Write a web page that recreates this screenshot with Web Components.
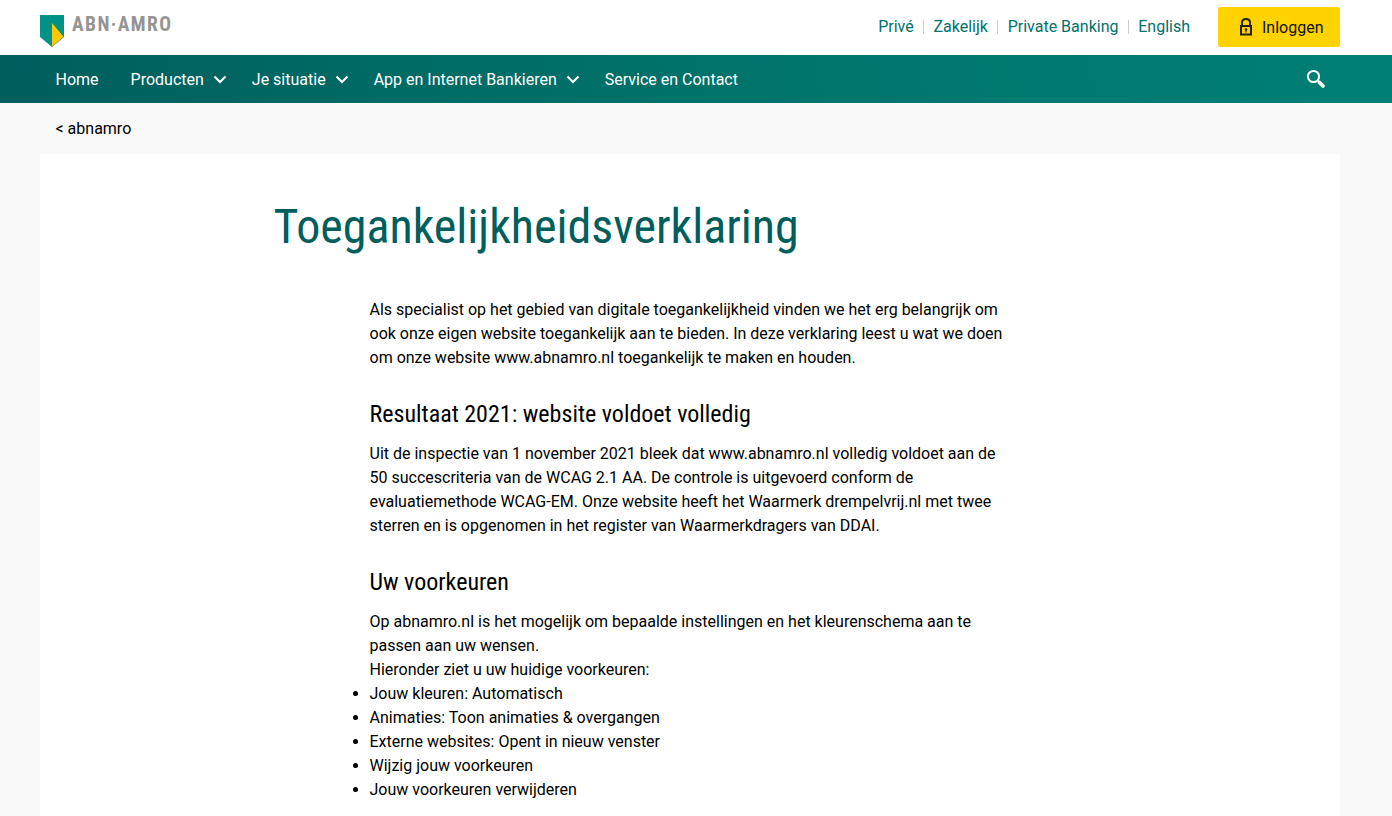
<!DOCTYPE html>
<html lang="nl">
<head>
<meta charset="utf-8">
<title>Toegankelijkheidsverklaring - ABN AMRO</title>
<style>
html,body{margin:0;height:816px;overflow:hidden}
body{background:#f9f9f9;color:#000;font:16px/24px Roboto,"Liberation Sans",sans-serif}
</style>
</head>
<body>
<bank-page></bank-page>
<script>
function define(name, html){
  const t=document.createElement('template');
  t.innerHTML=html;
  customElements.define(name,class extends HTMLElement{
    constructor(){super();this.attachShadow({mode:'open'}).append(t.content.cloneNode(true));}
  });
}

define('bank-logo',`
<style>:host{display:flex;align-items:flex-start}svg{display:block}
text{font:700 19.500px "Roboto Condensed",Roboto,sans-serif;font-stretch:80%}</style>
<svg width="132" height="34" viewBox="0 0 132 34" role="img" aria-label="ABN AMRO">
<path fill="#009286" d="M0 1h24v22L12 33 0 23z"/>
<path fill="#ffc800" d="M12 9l11.500 13.700L12 32.500z"/>
<text x="32" y="17" textLength="99" lengthAdjust="spacing" fill="#949494">ABN·AMRO</text>
</svg>`);

define('segment-links',`
<style>:host{display:flex;color:#00716b;line-height:24px}
span+span::before{content:"";display:inline-block;width:1px;height:14px;background:#ccc;margin:0 9.400px;vertical-align:-2px}</style>
<span>Privé</span><span>Zakelijk</span><span>Private Banking</span><span>English</span>`);

define('login-button',`
<style>:host{display:flex;box-sizing:border-box;width:122px;height:40px;border-radius:2px;background:#ffd200;color:#111;align-items:center;padding-left:21px}
svg{margin-right:9px}span{padding-top:2px}</style>
<svg width="14" height="20" viewBox="0 0 14 20" fill="none" stroke="#222" stroke-width="2"><path d="M3 9V5.500C3 .800 11 .800 11 5.500V9"/><rect x="2" y="9" width="10" height="8.500"/><circle cx="7" cy="12.500" r="1.300" fill="#222" stroke="none"/><path d="M7 12.500v3" stroke-width="1.200"/></svg><span><slot></slot></span>`);

define('top-bar',`
<style>:host{display:flex;height:55px;box-sizing:border-box;background:#fff;padding:7px 52px 0 40px;align-items:flex-start}
bank-logo{margin-top:7px}segment-links{margin:8px 28px 0 auto}</style>
<bank-logo></bank-logo><segment-links></segment-links><login-button>Inloggen</login-button>`);

define('nav-item',`
<style>:host{display:flex;align-items:center;margin-right:32px;white-space:nowrap}
span{padding-top:2px}
svg{display:none;margin-left:9px}:host([menu]) svg{display:block}:host([menu]){margin-right:25px}</style>
<span><slot></slot></span><svg width="14" height="10" viewBox="0 0 14 10" fill="none" stroke="#fff" stroke-width="2"><path d="M1.500 2.500 7 8l5.500-5.500"/></svg>`);

define('nav-bar',`
<style>:host{display:flex;height:48px;align-items:center;box-sizing:border-box;padding:0 66px 0 55.500px;color:#fff;background:linear-gradient(75deg,#005e5d 0%,#006b65 30%,#00766d 60%,#008075 100%)}
.search{margin-left:auto}</style>
<nav-item>Home</nav-item><nav-item menu>Producten</nav-item><nav-item menu>Je situatie</nav-item><nav-item menu>App en Internet Bankieren</nav-item><nav-item>Service en Contact</nav-item>
<svg class="search" width="20" height="20" viewBox="0 0 20 20" fill="none" stroke="#fff"><circle cx="7.500" cy="7.500" r="5.600" stroke-width="2"/><path d="M11.500 11.500l2 2" stroke-width="2"/><path d="M13.500 13.500l3.500 3.500" stroke-width="3.800" stroke-linecap="round"/></svg>`);

define('text-section',`
<style>:host{display:block;margin-bottom:28px}:host(:last-child){margin-bottom:0}</style>
<slot></slot>`);

define('bank-page',`
<style>:host{display:block}
.crumb{box-sizing:border-box;padding:14px 0 0 55.500px;height:51px}
main{box-sizing:border-box;margin:0 52px 0 40px;background:#fff;height:662px;padding:45px 0 0 233.500px}
h1{margin:0 0 43px;font:400 48px/56px "Roboto Condensed",Roboto,sans-serif;font-stretch:75%;color:#005e5d;white-space:nowrap}
article{margin-left:96px;white-space:nowrap}
h2{margin:0 0 12px;font:400 24px/32px "Roboto Condensed",Roboto,sans-serif;font-stretch:75%}
p,ul{margin:0;padding:0}</style>
<top-bar></top-bar><nav-bar></nav-bar>
<div class="crumb">&lt; abnamro</div>
<main><h1>Toegankelijkheidsverklaring</h1>
<article>
<text-section><p>Als specialist op het gebied van digitale toegankelijkheid vinden we het erg belangrijk om<br>ook onze eigen website toegankelijk aan te bieden. In deze verklaring leest u wat we doen<br>om onze website www.abnamro.nl toegankelijk te maken en houden.</p></text-section>
<text-section><h2>Resultaat 2021: website voldoet volledig</h2><p>Uit de inspectie van 1 november 2021 bleek dat www.abnamro.nl volledig voldoet aan de<br>50 succescriteria van de WCAG 2.1 AA. De controle is uitgevoerd conform de<br>evaluatiemethode WCAG-EM. Onze website heeft het Waarmerk drempelvrij.nl met twee<br>sterren en is opgenomen in het register van Waarmerkdragers van DDAI.</p></text-section>
<text-section><h2>Uw voorkeuren</h2><p>Op abnamro.nl is het mogelijk om bepaalde instellingen en het kleurenschema aan te<br>passen aan uw wensen.<br>Hieronder ziet u uw huidige voorkeuren:</p>
<ul><li>Jouw kleuren: Automatisch</li><li>Animaties: Toon animaties &amp; overgangen</li><li>Externe websites: Opent in nieuw venster</li><li>Wijzig jouw voorkeuren</li><li>Jouw voorkeuren verwijderen</li></ul></text-section>
</article></main>`);
</script>
</body>
</html>
